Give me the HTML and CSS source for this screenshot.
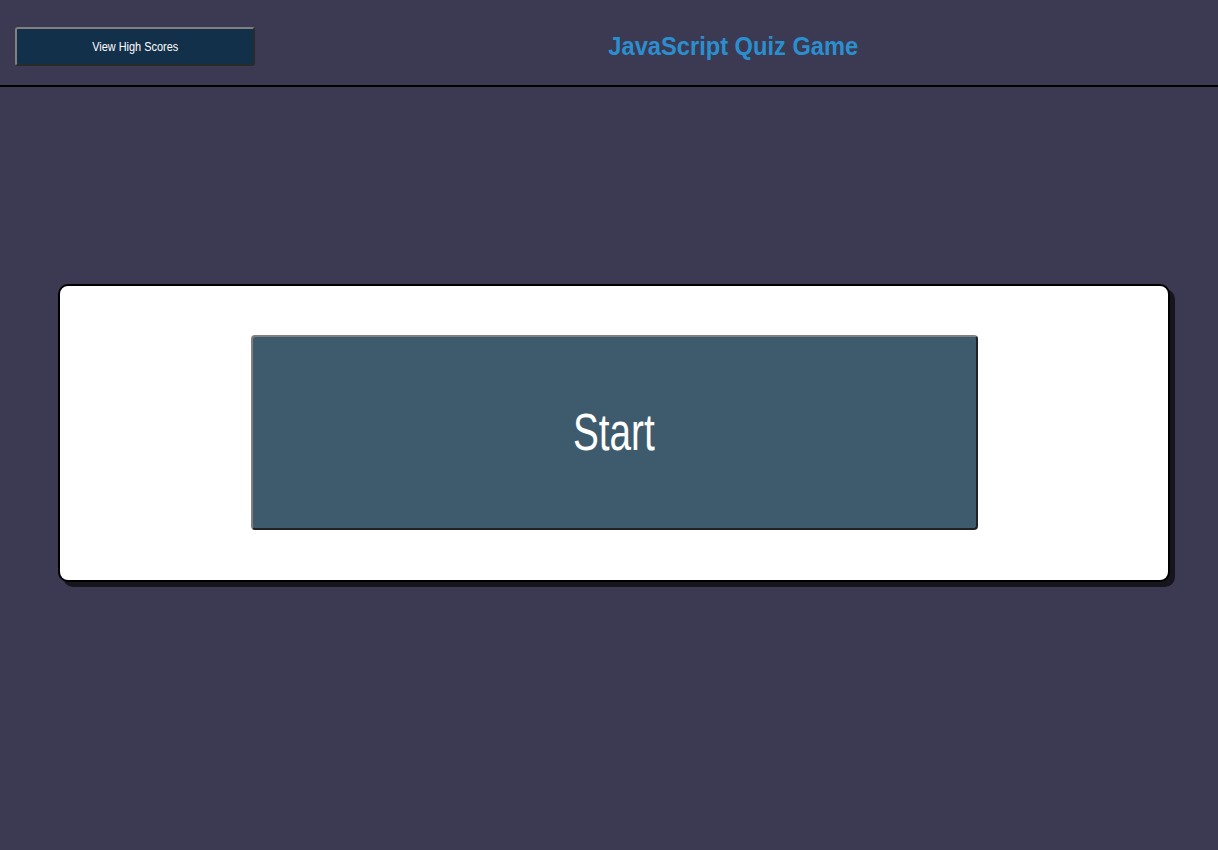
FILE: index.html
```
<!DOCTYPE html>
<html>
<head>
<meta charset="utf-8">
<link rel="stylesheet" href="styles.css">
</head>
<body>
<header class="top">
  <button class="scores-btn"><span class="narrow-sm">View High Scores</span></button>
  <h1 class="title"><span class="narrow-title">JavaScript Quiz Game</span></h1>
</header>
<main class="main">
  <section class="card">
    <button class="start-btn"><span class="narrow-lg">Start</span></button>
  </section>
</main>
</body>
</html>
```
FILE: styles.css
```
html, body {
  margin: 0;
  padding: 0;
  background: #3c3a52;
  font-family: "Liberation Sans", Arial, sans-serif;
  height: 100%;
}
.top {
  display: flex;
  align-items: flex-start;
  height: 85px;
  border-bottom: 2px solid #000;
  box-sizing: content-box;
}
.scores-btn {
  margin-left: 15px;
  margin-top: 27px;
  width: 240px;
  height: 39px;
  padding: 0;
  background: #13304a;
  color: #fff;
  font-family: "Liberation Sans", Arial, sans-serif;
  font-size: 13px;
  border: 2px solid;
  border-color: #808080 #2a2a2a #2a2a2a #808080;
  border-radius: 3px;
  box-sizing: border-box;
}
.narrow-sm {
  display: inline-block;
  transform: scaleX(0.84);
}
.title {
  flex: 1;
  margin: 0;
  padding-top: 31px;
  padding-right: 6px;
  line-height: 30px;
  text-align: center;
  font-family: "Liberation Sans", Arial, sans-serif;
  font-weight: bold;
  font-size: 26px;
  color: #2b8fcf;
}
.narrow-title {
  display: inline-block;
  transform: scaleX(0.91);
}
.main {
  padding-top: 197px;
}
.card {
  margin-left: 58px;
  width: 1112px;
  height: 298px;
  box-sizing: border-box;
  background: #fff;
  border: 2px solid #000;
  border-radius: 10px;
  box-shadow: 5px 5px 0 #16151d;
  display: flex;
  justify-content: center;
  align-items: flex-start;
  padding-top: 49px;
}
.start-btn {
  width: 727px;
  height: 195px;
  padding: 0;
  background: #3d5b6d;
  color: #fff;
  font-family: "Liberation Sans", Arial, sans-serif;
  font-size: 51px;
  border: 2px solid;
  border-color: #808080 #222 #222 #808080;
  border-radius: 4px;
  box-sizing: border-box;
}
.narrow-lg {
  display: inline-block;
  transform: scaleX(0.76);
}
```
